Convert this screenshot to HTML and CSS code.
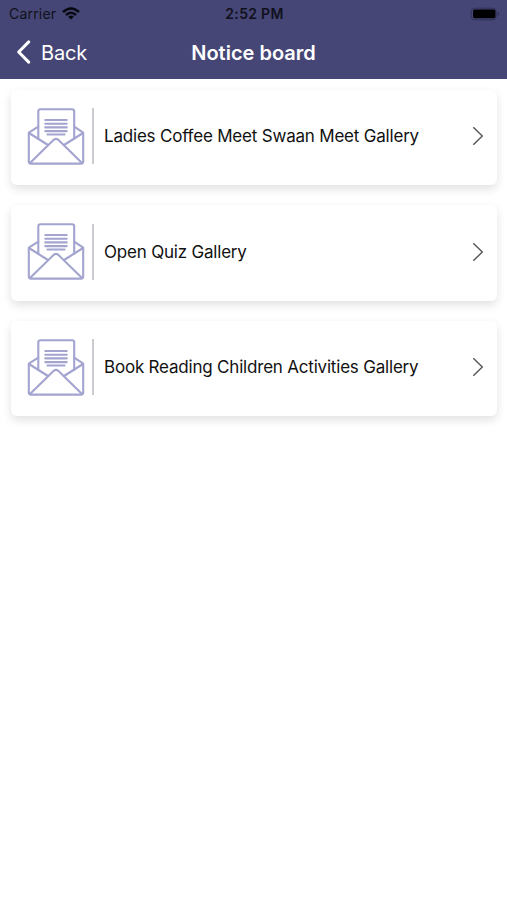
FILE: index.html
```html
<!DOCTYPE html>
<html lang="en">
<head>
    <meta charset="UTF-8">
    <meta name="viewport" content="width=device-width, initial-scale=1.0">
    <title>Notice board</title>
    <link rel="stylesheet" href="styles.css">
</head>
<body>
    <!-- shared icons -->
    <svg class="icon-defs" width="0" height="0">
        <symbol id="icon-letter" viewBox="0 0 58 57">
            <g fill="none" stroke="#a3a4cf" stroke-width="2.1" stroke-linecap="round" stroke-linejoin="round">
                <path d="M11.3 31V3.5Q11.3 1.3 13.5 1.3H45Q47.2 1.3 47.2 3.5V31"/>
                <path d="M11.3 18.6L1.8 24.6V53.5Q1.8 55.6 4 55.6H54Q56.2 55.6 56.2 53.5V24.6L47.2 18.6"/>
                <path d="M2 25L21 37M56 25L37 37"/>
                <path d="M3 55L27 31.6Q29 30 31 31.6L55 55"/>
                <path d="M18.3 12H39.7M18.3 15.7H39.7M18.3 19.4H39.7M18.3 23.1H39.7M20.5 26.5H37.5"/>
            </g>
        </symbol>
        <symbol id="icon-arrow" viewBox="0 0 12 20">
            <path d="M1.3 1.2L10.3 10L1.3 18.8" fill="none" stroke="#555" stroke-width="1.4"/>
        </symbol>
    </svg>

    <header class="header">
        <div class="status-bar">
            <div class="carrier">
                <span>Carrier</span>
                <svg class="wifi" width="18" height="13" viewBox="0 0 18 13">
                    <g fill="none" stroke="#080810" stroke-width="2.5">
                        <path d="M1 5Q9 -2 17 5"/>
                        <path d="M4 8Q9 3.6 14 8"/>
                    </g>
                    <path d="M6.2 9.7Q9 7.5 11.8 9.7L9 12.6Z" fill="#080810"/>
                </svg>
            </div>
            <span class="time">2:52 PM</span>
            <svg class="battery" width="30" height="14" viewBox="0 0 30 14">
                <rect x="1.2" y="1.2" width="25" height="11.6" rx="3.3" fill="none" stroke="#303158"/>
                <rect x="3" y="2.6" width="22.4" height="8.6" rx="1.6" fill="#000"/>
                <path d="M27.7 5V9Q29.2 8.6 29.2 7T27.7 5Z" fill="#303158"/>
            </svg>
        </div>
        <div class="nav-bar">
            <div class="back">
                <svg width="15" height="24" viewBox="0 0 15 24">
                    <path d="M12.7 1.9L2.7 12L12.7 22.1" fill="none" stroke="#fff" stroke-width="3" stroke-linecap="round" stroke-linejoin="round"/>
                </svg>
                <span>Back</span>
            </div>
            <h1 class="title">Notice board</h1>
        </div>
    </header>

    <main class="list">
        <div class="card">
            <svg class="letter"><use href="#icon-letter"/></svg>
            <p class="name">Ladies Coffee Meet Swaan Meet Gallery</p>
            <svg class="arrow"><use href="#icon-arrow"/></svg>
        </div>
        <div class="card">
            <svg class="letter"><use href="#icon-letter"/></svg>
            <p class="name">Open Quiz Gallery</p>
            <svg class="arrow"><use href="#icon-arrow"/></svg>
        </div>
        <div class="card">
            <svg class="letter"><use href="#icon-letter"/></svg>
            <p class="name">Book Reading Children Activities Gallery</p>
            <svg class="arrow"><use href="#icon-arrow"/></svg>
        </div>
    </main>
</body>
</html>
```
FILE: styles.css
```css
* {
    box-sizing: border-box;
}

body {
    margin: 0;
    min-height: 100vh;
    background: #fff;
    font-family: Inter, "Liberation Sans", sans-serif;
    color: #111;
}

.icon-defs {
    display: block;
}

/* header */
.header {
    height: 79px;
    background: #454675;
}

.status-bar,
.nav-bar {
    display: grid;
    grid-template-columns: 1fr auto 1fr;
    align-items: center;
}

.status-bar {
    height: 27px;
    padding: 0 7px 0 9px;
    font-size: 14px;
    color: #10101c;
}

.carrier {
    display: flex;
    align-items: center;
    gap: 6px;
    letter-spacing: 0.2px;
}

.time {
    font-weight: 600;
    letter-spacing: 0.3px;
}

.battery {
    justify-self: end;
}

.nav-bar {
    height: 52px;
    padding: 0 16px;
    color: #fff;
}

.back {
    display: flex;
    align-items: center;
    gap: 10px;
    font-size: 20px;
    letter-spacing: -0.2px;
}

.back svg {
    margin-top: -2px;
}

.title {
    margin: 0;
    font-size: 20px;
    font-weight: 600;
}

/* notices */
.list {
    display: flex;
    flex-direction: column;
    gap: 20px;
    padding: 10.5px 10px 0 11px;
}

.card {
    display: flex;
    align-items: center;
    height: 95.5px;
    padding: 0 13px 2px 16px;
    background: #fff;
    border-radius: 6px;
    box-shadow: 0 4px 10px rgba(0, 0, 0, 0.12);
}

.letter {
    width: 58px;
    height: 57px;
}

.name {
    display: flex;
    flex: 1;
    align-items: center;
    height: 56px;
    margin: 0 0 0 7px;
    padding-left: 10px;
    border-left: 2px solid #cbcbd1;
    font-size: 17px;
    letter-spacing: -0.2px;
    white-space: nowrap;
}

.arrow {
    width: 12px;
    height: 20px;
}
```
